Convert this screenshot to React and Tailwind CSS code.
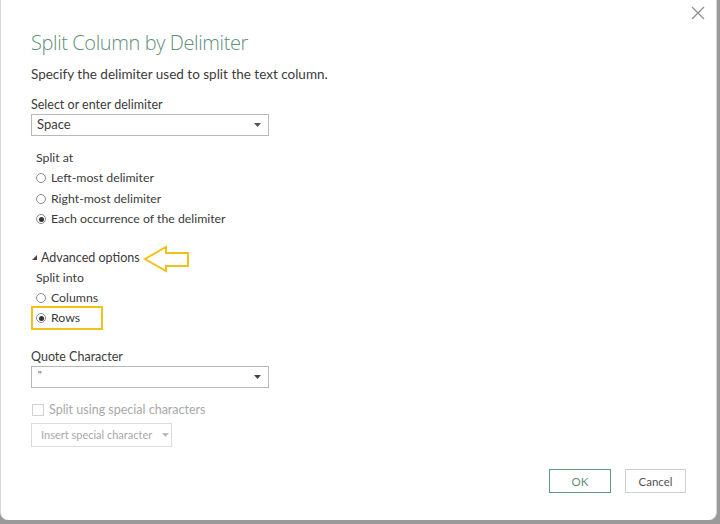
import React from "react";

const Radio = ({checked, label}) => (
    <div className="flex items-center h-[20.5px]">
        <span className="w-[10px] h-[10px] rounded-full border border-[#8a8a8a] bg-white flex items-center justify-center">
            {checked && <span className="w-[5px] h-[5px] rounded-full bg-[#333]"></span>}
        </span>
        <span className="ml-[5px]">{label}</span>
    </div>
);

const Caret = ({color = "#555"}) => (
    <svg width="7" height="4" viewBox="0 0 7 4"><path d="M0 0 L7 0 L3.5 4 Z" fill={color}/></svg>
);

const App = () => {
    return (
        <div className="w-[720px] h-[524px] bg-[#9a9a9a] font-['Lato','Liberation_Sans',sans-serif] text-[#3b3b3b]">
            <div className="relative w-[717px] h-[520px] bg-white rounded-b-[8px] border-l border-r border-[#d8d8d8] flex flex-col pl-[30px]">
                <button className="absolute right-[11px] top-[6px] text-[#8a8a8a]">
                    <svg width="14" height="14" viewBox="0 0 14 14"><path d="M1 1 L13 13 M13 1 L1 13" stroke="#8c8c8c" strokeWidth="1.2"/></svg>
                </button>

                <div className="mt-[30px] text-[20px] leading-[26px] text-[#5e8f77] font-['Open_Sans',sans-serif] font-light tracking-[-0.4px]">Split Column by Delimiter</div>
                <div className="mt-[9px] text-[13.5px] leading-[18px]">Specify the delimiter used to split the text column.</div>

                <div className="mt-[14px] text-[12.5px] leading-[16px]">Select or enter delimiter</div>
                <div className="mt-[1px] w-[238px] h-[22px] border border-[#b8b8b8] flex items-center justify-between pl-[5px] pr-[7px] text-[13px]">
                    <span>Space</span>
                    <Caret/>
                </div>

                <div className="mt-[12px] pl-[5px] text-[12.3px] leading-[20px]">
                    <div>Split at</div>
                    <Radio label="Left-most delimiter"/>
                    <Radio label="Right-most delimiter"/>
                    <Radio checked label="Each occurrence of the delimiter"/>
                </div>

                <div className="mt-[18px] flex items-center text-[12.5px] leading-[20px] relative">
                    <span className="ml-[1px] mr-[4px]">
                        <svg width="5" height="5" viewBox="0 0 5 5"><path d="M5 0 L5 5 L0 5 Z" fill="#444"/></svg>
                    </span>
                    <span>Advanced options</span>
                    <svg className="absolute left-[112px] top-[-3px]" width="48" height="28" viewBox="0 0 48 28">
                        <path d="M2 14 L23 2 L23 8 L45 8 L45 21 L23 21 L23 26 Z" fill="none" stroke="#f2c21b" strokeWidth="2" strokeLinejoin="miter"/>
                    </svg>
                </div>

                <div className="pl-[5px] text-[12.3px] leading-[20px]">
                    <div>Split into</div>
                    <Radio label="Columns"/>
                    <div className="relative">
                        <Radio checked label="Rows"/>
                        <div className="absolute left-[-5px] top-[-2px] w-[72px] h-[24px] border-2 border-[#f2c21b]"></div>
                    </div>
                </div>

                <div className="mt-[20px] text-[12.5px] leading-[16px]">Quote Character</div>
                <div className="mt-[1px] w-[238px] h-[22px] border border-[#b8b8b8] flex items-center justify-between pl-[6px] pr-[7px] text-[10px] font-['Liberation_Sans',sans-serif]">
                    <span className="text-[#555] -mt-[3px]">"</span>
                    <Caret color="#444"/>
                </div>

                <div className="mt-[13px] flex items-center text-[12.5px] text-[#a8a8a8]">
                    <span className="w-[12px] h-[12px] border border-[#d0d0d0] ml-[1px]"></span>
                    <span className="ml-[5px]">Split using special characters</span>
                </div>

                <div className="mt-[4px] w-[141px] h-[24px] border border-[#dcdcdc] flex items-center pl-[9px] text-[11px] text-[#a8a8a8]">
                    <span>Insert special character</span>
                    <span className="ml-[10px]"><Caret color="#bbb"/></span>
                </div>

                <div className="mt-[22px] flex justify-end pr-[30px] gap-[14px] text-[11.5px]">
                    <button className="w-[62px] h-[24px] border border-[#5e9a7d] text-[#5e8f77]">OK</button>
                    <button className="w-[61px] h-[24px] border border-[#cfcfcf] text-[#555]">Cancel</button>
                </div>
            </div>
        </div>
    );
};

export default App;
